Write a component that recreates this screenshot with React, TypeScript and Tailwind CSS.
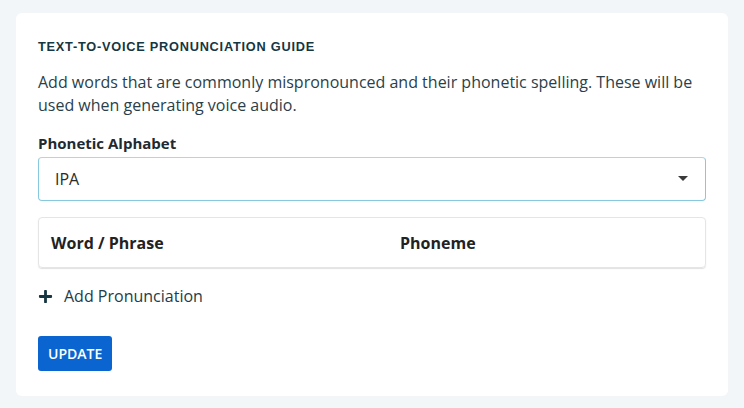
import { FaPlus } from "react-icons/fa";

const App = () => {
    return (
        <div className="min-h-screen w-full bg-[#f3f6f9] px-4 pt-[13px] pb-3" style={{ fontFamily: '"Open Sans", sans-serif' }}>
            <div className="bg-white rounded-md px-[22px] pt-[26px] pb-[25px] text-[#243c47]">
                <h2 className="text-[12.75px] font-bold uppercase tracking-[0.06em] text-[#163642] leading-4" style={{ fontFamily: '"Liberation Sans", Arial, sans-serif' }}>
                    Text-to-Voice Pronunciation Guide
                </h2>
                <p className="mt-[16px] text-[16px] leading-[23px] text-[#2a3f4a]">
                    Add words that are commonly mispronounced and their phonetic spelling. These will be used when generating voice audio.
                </p>

                <label className="block mt-[16px] text-[15px] font-bold text-[#1f2a30] leading-5">Phonetic Alphabet</label>
                <div className="mt-[4px] h-[44px] flex items-center justify-between rounded border border-[#86c8de] border-t-[#c9cdd0] px-4">
                    <span className="text-[16px] text-[#2b2b2b]">IPA</span>
                    <svg width="10" height="6" viewBox="0 0 10 6" className="mr-[1px]">
                        <path d="M0 0 L10 0 L5 5 Z" fill="#3a3a3a" />
                    </svg>
                </div>

                <div className="mt-4 h-[51px] flex items-center rounded border border-[#e3e5e7] shadow-[0_1px_1px_rgba(0,0,0,0.12)] px-3">
                    <span className="w-[349px] text-[16px] font-bold text-[#222]">Word / Phrase</span>
                    <span className="text-[16px] font-bold text-[#222]">Phoneme</span>
                </div>

                <button className="mt-[16px] flex items-center gap-[11px] text-[16px] text-[#243c47]">
                    <FaPlus className="text-[15px] text-[#163642]" />
                    Add Pronunciation
                </button>

                <button className="mt-[28px] block h-[35px] px-[10px] rounded-[3px] bg-[#0b65d0] text-white text-[14px] font-semibold uppercase">
                    Update
                </button>
            </div>
        </div>
    )
}

export default App
